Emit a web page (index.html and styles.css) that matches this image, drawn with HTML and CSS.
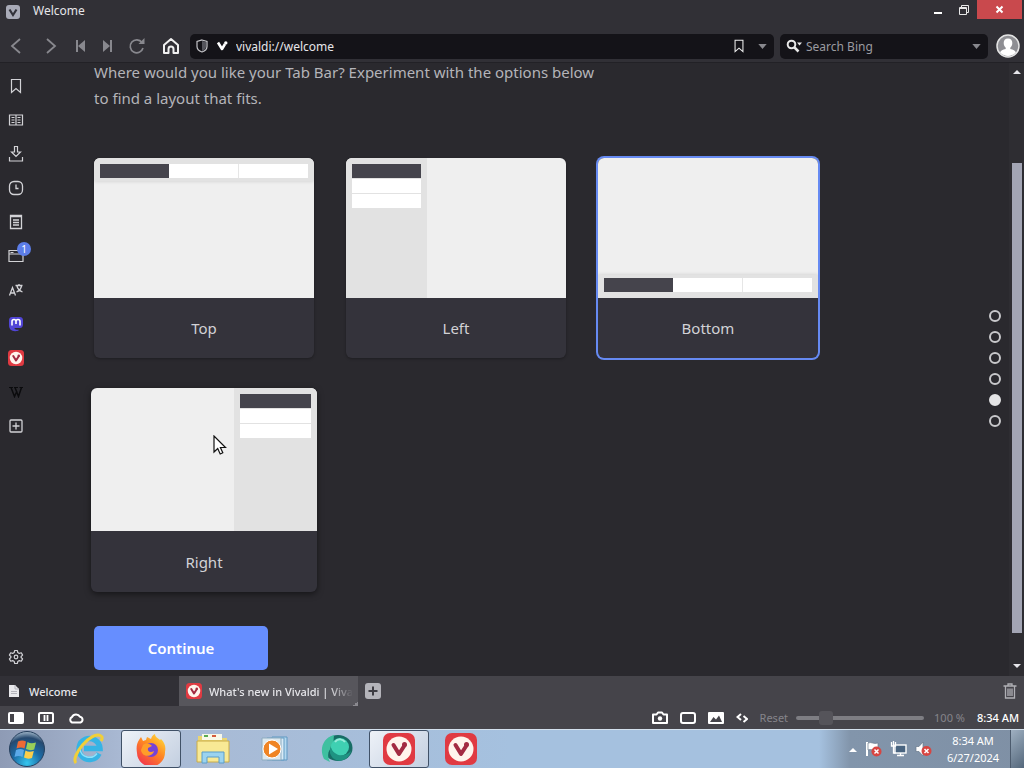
FILE: index.html
```html
<!DOCTYPE html>
<html lang="en">
<head>
  <meta charset="UTF-8">
  <title>Welcome</title>
  <link rel="stylesheet" href="styles.css">
</head>
<body>

<!-- Shared icons -->
<svg class="sprite" aria-hidden="true">
  <symbol id="i-vivaldi" viewBox="0 0 32 32">
    <rect width="32" height="32" rx="7" fill="#e03a42"/>
    <circle cx="16" cy="16" r="12.500" fill="#fff4ec"/>
    <path d="M10.500 12l5.500 9 5.500-8.500" fill="none" stroke="#a32b42" stroke-width="4" stroke-linecap="round" stroke-linejoin="round"/>
    <circle cx="21.500" cy="11.500" r="2.500" fill="#a32b42"/>
  </symbol>
  <symbol id="i-bookmark" viewBox="0 0 16 16">
    <path d="M3.500 1.500h9v13L8 10.500l-4.500 4z" fill="none" stroke="currentColor" stroke-width="1.200"/>
  </symbol>
  <symbol id="i-down" viewBox="0 0 10 6"><path d="M0 0h10L5 6z" fill="currentColor"/></symbol>
</svg>

<header class="titlebar">
  <svg class="app-icon" viewBox="0 0 14 14"><rect width="14" height="14" rx="3" fill="#a9abb8"/><path d="M3.500 4.500L7 10l3.500-5.500" fill="none" stroke="#33333b" stroke-width="2.200"/></svg>
  <span class="title">Welcome</span>
  <div class="window-buttons">
    <button class="win-btn" aria-label="Minimize"><svg width="12" height="12"><path d="M2 9h8" stroke="#fff" stroke-width="2"/></svg></button>
    <button class="win-btn" aria-label="Restore"><svg width="12" height="12" fill="none" stroke="#e8e8e8"><path d="M1.500 3.500h7v7h-7zM1 4.500h8M3.500 3V1.500h7v7H9"/></svg></button>
    <button class="win-btn close" aria-label="Close"><svg width="10" height="10"><path d="M1.500 1.500l6 6M7.500 1.500l-6 6" stroke="#fff" stroke-width="2"/></svg></button>
  </div>
</header>

<div class="toolbar">
  <div class="nav">
    <button class="nav-btn wide" aria-label="Back"><svg width="18" height="18"><path d="M12 2L4 9l8 7" fill="none" stroke="currentColor" stroke-width="1.800"/></svg></button>
    <button class="nav-btn wide" aria-label="Forward"><svg width="18" height="18"><path d="M5 2l8 7-8 7" fill="none" stroke="currentColor" stroke-width="1.800"/></svg></button>
    <button class="nav-btn" aria-label="Rewind"><svg width="12" height="12"><path d="M2 0v12" stroke="currentColor" stroke-width="2"/><path d="M10 0v12L3 6z" fill="currentColor"/></svg></button>
    <button class="nav-btn" aria-label="Fast forward"><svg width="12" height="12"><path d="M10 0v12" stroke="currentColor" stroke-width="2"/><path d="M2 0v12l7-6z" fill="currentColor"/></svg></button>
    <button class="nav-btn wide" aria-label="Reload"><svg width="18" height="18"><path d="M14 5.500A6.500 6.500 0 1 0 15 11" fill="none" stroke="currentColor" stroke-width="1.700"/><path d="M16.500 1v6h-6z" fill="currentColor"/></svg></button>
    <button class="nav-btn wide home" aria-label="Home"><svg width="18" height="18"><path d="M2 16V8l7-6 7 6v8h-4.500v-4a2.500 2.500 0 0 0-5 0v4z" fill="none" stroke="currentColor" stroke-width="2" stroke-linejoin="round"/></svg></button>
  </div>

  <div class="field address">
    <svg width="12" height="14"><path d="M6 1l5 1.500v5C11 10 9 12 6 13 3 12 1 10 1 7.500v-5z" fill="none" stroke="#c4c4c8" stroke-width="1.200"/><path d="M6 2v10c2.500-1 4-2.500 4-4.500V3z" fill="#55555c"/></svg>
    <svg width="12" height="10"><path d="M2 1.500L6 8l3-5" fill="none" stroke="#fff" stroke-width="2.600" stroke-linejoin="round"/><circle cx="9.800" cy="1.900" r="1.700" fill="#fff"/></svg>
    <input type="text" value="vivaldi://welcome" aria-label="Address">
    <button class="field-btn bright" aria-label="Bookmark page"><svg width="14" height="14"><use href="#i-bookmark"/></svg></button>
    <button class="field-btn" aria-label="Address history"><svg width="9" height="5"><use href="#i-down"/></svg></button>
  </div>

  <div class="field search">
    <svg width="16" height="14"><circle cx="5.500" cy="5.500" r="3.800" fill="none" stroke="#e8e8e8" stroke-width="2"/><path d="M8.500 8.500l4 4" stroke="#e8e8e8" stroke-width="2.500"/><path d="M11 3.500h5l-2.500 3z" fill="#e8e8e8"/></svg>
    <input type="text" placeholder="Search Bing" aria-label="Search">
    <button class="field-btn" aria-label="Search history"><svg width="9" height="5"><use href="#i-down"/></svg></button>
  </div>

  <button class="avatar" aria-label="Profile"><svg width="24" height="24"><circle cx="12" cy="12" r="11" fill="#8e8e93" stroke="#e4e4e4" stroke-width="1.500"/><path d="M12 4.500c3 0 4.300 2 4.300 4.500 0 2.200-.8 3.600-2 4.700v1.300c3 .7 5 1.600 5.600 3.600A11 11 0 0 1 4.100 18.600c.6-2 2.600-2.900 5.600-3.600v-1.300c-1.200-1.100-2-2.500-2-4.700 0-2.500 1.300-4.500 4.300-4.500z" fill="#fff"/></svg></button>
</div>

<main class="main">
  <nav class="panel">
    <button aria-label="Bookmarks"><svg width="16" height="16"><use href="#i-bookmark"/></svg></button>
    <button aria-label="Reading list"><svg width="16" height="16" fill="none" stroke="currentColor" stroke-width="1.200"><path d="M1.500 3h13v10h-13zM8 3v10M3.500 5.500h3M3.500 8h3M3.500 10.500h3M9.500 5.500h3M9.500 8h3M9.500 10.500h3"/></svg></button>
    <button aria-label="Downloads"><svg width="16" height="16" fill="none" stroke="currentColor" stroke-width="1.200"><path d="M6.500.500h3v5.500h3L8 10.500 3.500 6h3zM1.500 11v4h13v-4"/></svg></button>
    <button aria-label="History"><svg width="16" height="16" fill="none" stroke="currentColor" stroke-width="1.300"><rect x="1.500" y="1.500" width="13" height="13" rx="4.500"/><path d="M8 4.500v4h2.500"/></svg></button>
    <button aria-label="Notes"><svg width="16" height="16" fill="none" stroke="currentColor" stroke-width="1.300"><path d="M2.500 1.500h11v13h-11zM2.500 2.500h11M5 6h6M5 8.500h6M5 11h6"/></svg></button>
    <button aria-label="Windows"><svg width="16" height="16" fill="none" stroke="currentColor" stroke-width="1.200"><path d="M1 2.500h14v11H1zM1 6h14M2.500 4.500h3"/></svg><span class="badge">1</span></button>
    <button aria-label="Translate"><svg width="16" height="16" fill="none" stroke="currentColor" stroke-width="1.300"><path d="M1.500 13.500l3-8 3 8M2.500 11h4M7.500 3.500h7M11 2v1.500M9 4c.5 2.500 3 5 5.500 6M13.500 4c-.5 2.500-2.500 5-5 6"/></svg></button>
    <button aria-label="Mastodon"><svg width="16" height="16"><path d="M4 1h8c2 0 3 1.500 3 3.500v4c0 2.500-1.500 3.500-3 3.500H6.500c0 1.500 1.500 2 4 1.500v1.200C5 16 1 14.500 1 9V4.500C1 2.500 2 1 4 1z" fill="#5145d6"/><path d="M4 9.500V5.500a2 2 0 0 1 4 0V8 5.500a2 2 0 0 1 4 0v4" fill="none" stroke="#fff" stroke-width="1.600"/></svg></button>
    <button aria-label="Vivaldi"><svg width="16" height="16"><use href="#i-vivaldi"/></svg></button>
    <button aria-label="Wikipedia"><svg width="14" height="12" fill="none" stroke="#0b0b0d"><path d="M0 1.500h4M5 1.500h4M10.500 1.500h3.500"/><path d="M2 1.500l3.500 9L8 5M6 1.500l3.500 9 3-9" stroke-width="1.500"/></svg></button>
    <button aria-label="Add web panel"><svg width="16" height="16" fill="none" stroke="currentColor" stroke-width="1.300"><rect x="2" y="2" width="12" height="12" rx="1"/><path d="M8 4.500v7M4.500 8h7"/></svg></button>
    <button class="settings" aria-label="Settings"><svg width="16" height="16" fill="none" stroke="currentColor" stroke-width="1.200" stroke-linejoin="round"><path d="M6.700 1.500h2.600l.5 2 1.500.9 2-.6 1.300 2.300L13.100 7.500v1l1.500 1.400-1.300 2.300-2-.6-1.500.9-.5 2H6.700l-.5-2-1.500-.9-2 .6-1.300-2.300 1.500-1.400v-1L1.400 6.100l1.300-2.300 2 .6 1.500-.9z"/><circle cx="8" cy="8" r="1.800"/></svg></button>
  </nav>

  <section class="page">
    <p class="intro">Where would you like your Tab Bar? Experiment with the options below<br>to find a layout that fits.</p>

    <form class="options">
      <label class="card">
        <span class="preview top"><span class="tabs"><i></i><i></i><i></i></span></span>
        <span class="card-label"><input type="radio" name="tabbar">Top</span>
      </label>
      <label class="card">
        <span class="preview left"><span class="tabs"><i></i><i></i><i></i></span></span>
        <span class="card-label"><input type="radio" name="tabbar">Left</span>
      </label>
      <label class="card selected">
        <span class="preview bottom"><span class="tabs"><i></i><i></i><i></i></span></span>
        <span class="card-label"><input type="radio" name="tabbar" checked>Bottom</span>
      </label>
      <label class="card hovered">
        <span class="preview right"><span class="tabs"><i></i><i></i><i></i></span></span>
        <span class="card-label"><input type="radio" name="tabbar">Right</span>
        <svg class="cursor" width="14" height="21"><path d="M1 1v16l3.700-3.500L7.200 19l2.600-1.200-2.400-5.300H12.500z" fill="#fff" stroke="#111" stroke-width="1.200"/></svg>
      </label>
    </form>

    <button class="continue">Continue</button>
  </section>

  <nav class="dots">
    <button aria-label="Step 1"></button>
    <button aria-label="Step 2"></button>
    <button aria-label="Step 3"></button>
    <button aria-label="Step 4"></button>
    <button class="current" aria-label="Step 5"></button>
    <button aria-label="Step 6"></button>
  </nav>

  <div class="scrollbar">
    <svg width="8" height="4"><path d="M0 4l4-4 4 4z" fill="#e6e6ea"/></svg>
    <div class="track"><div class="thumb"></div></div>
    <svg width="8" height="4"><path d="M0 0l4 4 4-4z" fill="#e6e6ea"/></svg>
  </div>
</main>

<div class="tabbar">
  <button class="tab active">
    <svg width="12" height="14"><path d="M1 1h6l4 4v8H1z" fill="#e9e9ec"/><path d="M7 1v4h4M3 7.500h6M3 9.500h6" fill="none" stroke="#b4b4bb"/></svg>
    <span>Welcome</span>
  </button>
  <button class="tab">
    <svg width="16" height="16"><use href="#i-vivaldi"/></svg>
    <span class="fade">What's new in Vivaldi | Viva</span>
  </button>
  <button class="new-tab" aria-label="New tab"><svg width="16" height="16"><rect width="16" height="16" rx="3" fill="#b4b4ba"/><path d="M8 3.500v9M3.500 8h9" stroke="#3d3c42" stroke-width="2"/></svg></button>
  <button class="trash" aria-label="Closed tabs"><svg width="14" height="16" fill="none" stroke="#b0b0b5" stroke-width="1.300"><path d="M.500 3h13M5 2.500V1h4v1.500M2.500 3v12h9V3M5 5.500v7.500M7 5.500v7.500M9 5.500v7.500"/></svg></button>
</div>

<footer class="statusbar">
  <button aria-label="Toggle panel"><svg width="16" height="12"><rect width="16" height="12" rx="2" fill="#fff"/><rect x="2" y="2" width="4" height="8" fill="#45444a"/></svg></button>
  <button aria-label="Tile tabs"><svg width="16" height="12" fill="none" stroke="#fff" stroke-width="2"><rect x="1" y="1" width="14" height="10" rx="1.500"/><path d="M6.500 3v6M9.500 3v6" stroke-width="1.800"/></svg></button>
  <button aria-label="Sync"><svg width="16" height="12"><path d="M4 10.500a3 3 0 0 1 0-5.500 4.500 4.500 0 0 1 8-.3 3 3 0 0 1 .5 5.800z" fill="none" stroke="#fff" stroke-width="2"/></svg></button>
  <div class="status-right">
    <button aria-label="Capture"><svg width="16" height="14"><path d="M1 3.500h3.500L6 1.500h4l1.500 2H15V12H1z" fill="none" stroke="#fff" stroke-width="2" stroke-linejoin="round"/><circle cx="8" cy="7.500" r="2.200" fill="#fff"/></svg></button>
    <button aria-label="Break mode"><svg width="16" height="12"><rect x="1" y="1" width="14" height="10" rx="2" fill="none" stroke="#fff" stroke-width="2"/></svg></button>
    <button aria-label="Images"><svg width="16" height="12"><rect width="16" height="12" rx="1" fill="#fff"/><path d="M2 10l3.500-5L8 7.500 11 3.500l3 6.500z" fill="#45444a"/></svg></button>
    <button aria-label="Page actions"><svg width="12" height="10" fill="none" stroke="#fff" stroke-width="2"><path d="M5 1L1.500 4 5 7M7.500 3L11 6 7.500 9"/></svg></button>
    <button class="reset">Reset</button>
    <input class="zoom" type="range" min="20" max="500" value="118" aria-label="Zoom">
    <span class="percent">100 %</span>
    <span class="clock">8:34 AM</span>
  </div>
</footer>

<div class="taskbar">
  <button class="start" aria-label="Start"><svg width="38" height="38">
    <defs><radialGradient id="orb" cx=".5" cy=".9" r=".9"><stop offset="0" stop-color="#35c6ef"/><stop offset=".45" stop-color="#1c6ca6"/><stop offset=".8" stop-color="#26496f"/><stop offset="1" stop-color="#a3b9cc"/></radialGradient></defs>
    <circle cx="19" cy="19" r="17.500" fill="url(#orb)" stroke="#26405e"/>
    <path d="M10 11.500c3-1.500 5.500-1.500 8 0l-1.500 7c-2.500-1.500-5-1.500-8 0z" fill="#ee6a35"/>
    <path d="M19.500 12c2.500 1.500 5 1.500 8.500.5l-1.800 7c-3 1-5.500.8-8.200-.5z" fill="#98cf59"/>
    <path d="M8 20c3-1.500 5.500-1.500 8 0l-1.500 7c-2.500-1.500-5-1.500-8 0z" fill="#5ba9e8"/>
    <path d="M17.500 20.500c2.500 1.500 5 1.500 8.300.5l-1.800 7c-3 1-5.500.8-8-.5z" fill="#fbce4b"/>
  </svg></button>
  <button class="task" aria-label="Internet Explorer"><svg width="34" height="34"><path d="M27 21.500a10.500 10.500 0 1 1 1-5H12" fill="none" stroke="#36b4e5" stroke-width="5.500"/><path d="M25 21.500A9.500 9.500 0 0 1 8 17" fill="none" stroke="#8fe0f8" stroke-width="1.500"/><path d="M4 31C-2 25 19-2 29 4c2 1 1 3.500 0 5" fill="none" stroke="#f1cf38" stroke-width="3"/></svg></button>
  <button class="task open" aria-label="Firefox"><svg width="32" height="32">
    <defs><linearGradient id="fox" x1=".9" y1="0" x2=".2" y2="1"><stop offset="0" stop-color="#ffe03c"/><stop offset=".45" stop-color="#ff8a22"/><stop offset="1" stop-color="#f2314e"/></linearGradient></defs>
    <path d="M4 7l2-3 2 4 3-1 1-3 4 2c1-3 2-4 4-5 0 3 3 4 5 6l1-1c4 4 5 8 4 13a14 14 0 0 1-28 1C1 14 2 10 4 7z" fill="url(#fox)"/>
    <circle cx="16" cy="17" r="7" fill="#7542d8"/><path d="M8 12c4-3 7-1 9 1l-4 2c-1 4 3 5 6 3-1 6-12 7-13-1z" fill="#ff9d29"/>
  </svg></button>
  <button class="task" aria-label="Explorer"><svg width="34" height="32"><path d="M2 3h9l2 2h18v22H2z" fill="#ead573"/><path d="M6 1h20v6H6z" fill="#f8f8e8"/><path d="M8 3h4" stroke="#5aab52" stroke-width="2"/><path d="M16 3h4" stroke="#d45b3d" stroke-width="2"/><path d="M1 8h32v21H1z" fill="#f8e995" stroke="#c9ac4b"/><path d="M6 30V19h22v11h-5v-6H11v6z" fill="#9bd3ef" stroke="#5b9dca"/></svg></button>
  <button class="task" aria-label="Media Player"><svg width="28" height="26"><path d="M11 1h15v23H11z" fill="#b4d8ef" stroke="#5e98c2"/><path d="M6 2h17v22H6z" fill="#d7eaf6" stroke="#659cc3"/><path d="M1 2h19v22H1z" fill="#dce8ee" stroke="#8eacc0"/><circle cx="11" cy="13" r="9" fill="#ef8424" stroke="#fff"/><path d="M8 7.500l9 5.500-9 5.500z" fill="#fff"/></svg></button>
  <button class="task" aria-label="Browser"><svg width="34" height="30"><ellipse cx="18" cy="14" rx="14.500" ry="13" fill="#176d65"/><path d="M14 1C3 4-1 15 4 25l6 3c-4-8-1-13 3-15z" fill="#3fc0a0"/><circle cx="20" cy="13" r="9" fill="#3fd0b2"/><path d="M10 12c3 9 13 13 21 5-3 12-18 13-21 2z" fill="#1f9382"/><path d="M15 8c3-4 8-3 10 0" fill="none" stroke="#97ebd9" stroke-width="2"/></svg></button>
  <button class="task open" aria-label="Vivaldi"><svg width="32" height="32"><use href="#i-vivaldi"/></svg></button>
  <button class="task" aria-label="Vivaldi"><svg width="32" height="32"><use href="#i-vivaldi"/></svg></button>

  <div class="tray">
    <button aria-label="Hidden icons"><svg width="8" height="5"><path d="M0 5l4-4 4 4z" fill="#fff"/></svg></button>
    <button aria-label="Action center"><svg width="17" height="16"><path d="M2 1v14" stroke="#fff" stroke-width="2"/><path d="M3 2c4-1.500 5 1.500 10 0v7C9 10.500 7 7.500 3 9z" fill="#fff" stroke="#69798b" stroke-width=".7"/><circle cx="11.500" cy="10.500" r="5" fill="#d84541"/><path d="M9.500 8.500l4 4M13.500 8.500l-4 4" stroke="#fff" stroke-width="1.500"/></svg></button>
    <button aria-label="Network"><svg width="17" height="16"><rect x="5" y="4" width="11" height="8" fill="#496480" stroke="#fff" stroke-width="1.400"/><path d="M7 14.500h7M10.500 12v2M1.500 1v4h4V1M3.500 0v12h2" fill="none" stroke="#fff" stroke-width="1.300"/></svg></button>
    <button aria-label="Volume"><svg width="17" height="16"><path d="M1 5.500h3L8 1v14l-4-4.500H1z" fill="#fff" stroke="#69798b" stroke-width=".7"/><circle cx="11.500" cy="10" r="5" fill="#d84541"/><path d="M9.500 8l4 4M13.500 8l-4 4" stroke="#fff" stroke-width="1.500"/></svg></button>
    <div class="tray-clock">8:34 AM<br>6/27/2024</div>
    <button class="show-desktop" aria-label="Show desktop"></button>
  </div>
</div>

</body>
</html>
```

FILE: styles.css
```css
* { box-sizing: border-box; }

body {
  margin: 0;
  height: 100vh;
  display: flex;
  flex-direction: column;
  overflow: hidden;
  background: #2a292e;
  color: #e6e6ea;
  font-family: "Noto Sans", "Open Sans", sans-serif;
  font-size: 12px;
}

button, input { font: inherit; color: inherit; }
button {
  display: flex;
  align-items: center;
  justify-content: center;
  flex: none;
  padding: 0;
  border: 0;
  background: none;
}
svg { display: block; flex: none; }
.sprite { position: absolute; width: 0; height: 0; }

/* Window title */
.titlebar {
  display: flex;
  height: 30px;
  flex: none;
  padding-left: 6px;
  background: #313036;
}
.app-icon { width: 14px; height: 14px; margin-top: 5px; }
.title { flex: 1; margin-left: 13px; line-height: 22px; }
.window-buttons { display: flex; padding-right: 2px; }
.win-btn { width: 26px; height: 19px; }
.close { width: 45px; background: #c9494d; }

/* Address toolbar */
.toolbar {
  display: flex;
  align-items: center;
  flex: none;
  gap: 6px;
  height: 33px;
  padding-right: 4px;
  background: #313036;
  border-bottom: 1px solid #222126;
}
.nav { display: flex; width: 184px; color: #88888e; }
.nav-btn { width: 26px; height: 24px; }
.nav-btn.wide { width: 34px; }
.home { color: #f0f0f0; }
.field {
  display: flex;
  align-items: center;
  gap: 8px;
  height: 25px;
  padding: 0 7px 0 6px;
  border-radius: 5px;
  background: #141318;
}
.address { flex: 1; }
.search { width: 208px; gap: 4px; }
.field input {
  flex: 1;
  min-width: 0;
  height: 19px;
  padding: 1px 0 0;
  border: 0;
  outline: 0;
  background: none;
}
.search input::placeholder { color: #9b9ba0; }
.field-btn { color: #88888e; height: 20px; }
.bright { color: #f0f0f0; margin-right: 4px; }
.avatar { margin-left: 2px; }

/* Panel and page */
.main { display: flex; flex: 1; min-height: 0; }
.panel {
  display: flex;
  flex-direction: column;
  width: 32px;
  padding: 6px 0 2px;
  color: #d2d2d6;
}
.panel button { position: relative; height: 34px; }
.panel .settings { margin-top: auto; }
.badge {
  position: absolute;
  top: 3px;
  right: 1px;
  width: 14px;
  border-radius: 7px;
  background: #5c7de8;
  color: #fff;
  font-size: 10px;
  line-height: 14px;
}

.page { flex: 1; min-width: 0; padding-left: 62px; overflow: hidden; }
.intro {
  margin: -4px 0 47px;
  color: #b4b4b9;
  font-size: 15px;
  line-height: 26px;
}
.options {
  display: grid;
  grid-template-columns: repeat(auto-fill, 220px);
  gap: 32px;
}
.card {
  position: relative;
  display: flex;
  flex-direction: column;
  height: 200px;
  border-radius: 6px;
  background: #34333b;
  box-shadow: 0 1px 3px rgba(0,0,0,0.3);
}
.selected { box-shadow: 0 0 0 2px #668af2; }
.hovered {
  height: auto;
  margin: -2px -3px;
  box-shadow: 0 2px 6px rgba(0,0,0,0.5);
}
.preview {
  display: flex;
  flex: none;
  height: 140px;
  overflow: hidden;
  border-radius: 6px 6px 0 0;
  background: #efefef;
}
.hovered .preview { height: 143px; }
.tabs {
  display: flex;
  width: 100%;
  padding: 6px;
  background: #e2e2e2;
  box-shadow: 0 0 4px rgba(0,0,0,0.15);
}
.tabs i { flex: 1; height: 14px; background: #fff; }
.tabs i:first-child { background: #45444c; }
.tabs i + i + i { border-left: 1px solid #e6e6e6; }
.top { align-items: flex-start; }
.top .tabs { padding-bottom: 3px; }
.bottom { align-items: flex-end; }
.bottom .tabs { padding-top: 3px; }
.right { justify-content: flex-end; }
.left .tabs, .right .tabs {
  flex-direction: column;
  gap: 1px;
  width: 81px;
  box-shadow: none;
}
.right .tabs { width: 83px; }
.left i, .right i { flex: none; }
.left i + i + i, .right i + i + i { border: 0; }
.card-label {
  display: flex;
  align-items: center;
  justify-content: center;
  height: 60px;
  color: #d2d2d6;
  font-size: 15px;
}
.hovered .card-label { height: 61px; }
.card-label input { appearance: none; width: 0; height: 0; margin: 0; }
.cursor { position: absolute; left: 122px; top: 47px; }

.continue {
  width: 174px;
  height: 44px;
  margin-top: 36px;
  border-radius: 5px;
  background: #668eff;
  color: #fff;
  font-size: 15px;
  font-weight: 600;
}

.dots {
  display: flex;
  flex-direction: column;
  align-self: center;
  gap: 9px;
  margin: 0 8px 2px 0;
}
.dots button {
  width: 12px;
  height: 12px;
  border: 2px solid #c8c8cb;
  border-radius: 50%;
}
.dots .current { background: #e4e4e6; border-color: #e4e4e6; }

.scrollbar {
  display: flex;
  flex-direction: column;
  align-items: center;
  width: 15px;
  padding: 7px 0 8px 1px;
  background: #2e2d32;
}
.track {
  display: flex;
  flex: 1;
  align-self: stretch;
  align-items: flex-end;
  justify-content: center;
  padding-bottom: 31px;
}
.thumb { width: 10px; height: 84%; background: #a3a5b4; }

/* Tabs */
.tabbar {
  display: flex;
  flex: none;
  height: 30px;
  background: #45444a;
}
.tab {
  justify-content: flex-start;
  gap: 7px;
  width: 179px;
  padding: 0 5px 0 7px;
  background: linear-gradient(135deg, transparent 50%, #8a898f 50%) no-repeat right bottom / 5px 5px #57565c;
  font-size: 11px;
  font-weight: 500;
  white-space: nowrap;
}
.tab.active { gap: 9px; padding-left: 8px; background: #313036; }
.fade { -webkit-mask-image: linear-gradient(to left, transparent, #000 24px); }
.new-tab { width: 30px; }
.trash { margin-left: auto; width: 28px; }

/* Status bar */
.statusbar {
  display: flex;
  align-items: center;
  flex: none;
  gap: 14px;
  height: 23px;
  padding: 0 5px 0 8px;
  background: #45444a;
  font-size: 11px;
}
.status-right { display: flex; align-items: center; gap: 12px; margin-left: auto; }
.reset, .percent { color: #85858a; }
.zoom {
  appearance: none;
  width: 128px;
  height: 4px;
  margin: 0 -2px 0 -4px;
  border-radius: 2px;
  background: #7e7e83;
}
.zoom::-webkit-slider-thumb {
  appearance: none;
  width: 14px;
  height: 14px;
  border-radius: 3px;
  background: #55545a;
}
.clock { color: #fff; font-weight: 500; }

/* Windows taskbar */
.taskbar {
  display: flex;
  flex: none;
  gap: 2px;
  height: 39px;
  border-top: 1px solid #d3e0ec;
  background: linear-gradient(to right, #8e9bb5, #a9b9d3 12%, #a5c1df 50%, #a5c1df 80%, #8295ab 83%, #7f90a5);
}
.start { width: 57px; padding-right: 3px; }
.task { width: 60px; }
.open {
  border: 1px solid #405167;
  border-radius: 3px;
  background: linear-gradient(135deg, #eef2f8, #c3cfe0);
}
.tray { display: flex; align-items: center; gap: 8px; margin-left: auto; color: #fff; }
.tray-clock {
  width: 58px;
  margin-left: 4px;
  font-size: 11px;
  line-height: 17px;
  text-align: center;
}
.show-desktop {
  align-self: stretch;
  width: 14px;
  border-left: 1px solid #4c5b6d;
  background: linear-gradient(135deg, #9fb0c1, #54677b);
}
```
